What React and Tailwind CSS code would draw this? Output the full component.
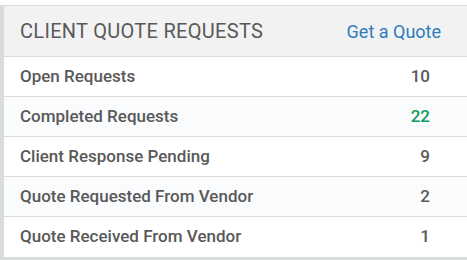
import React from 'react';

const rows = [
  { label: 'Open Requests', count: 10 },
  { label: 'Completed Requests', count: 22, green: true },
  { label: 'Client Response Pending', count: 9 },
  { label: 'Quote Requested From Vendor', count: 2 },
  { label: 'Quote Received From Vendor', count: 1 },
];

export default function App() {
  return (
    <div className="h-[260px] w-[467px] bg-[#d9ddd9] font-['Roboto',sans-serif]">
      <div className="ml-[3px] mt-[5px] w-[464px] border border-r-0 border-[#dcdcdc] bg-white">
        <div className="flex h-[51px] items-center justify-between bg-[#f2f2f2] pl-4 pr-[26px] border-b border-[#dcdcdc]">
          <h2 className="text-[20px] tracking-[0.3px] text-[#595959]">CLIENT QUOTE REQUESTS</h2>
          <a className="text-[18px] text-[#2f7bbd]">Get a Quote</a>
        </div>
        {rows.map((r, i) => (
          <div
            key={r.label}
            className={`flex h-10 items-center justify-between pl-4 pr-[37px] ${i < rows.length - 1 ? 'border-b border-[#dcdcdc]' : ''} ${i % 2 === 1 ? 'bg-[#f9fbfd]' : 'bg-white'}`}
          >
            <span className="text-[17px] font-medium text-[#595959]">{r.label}</span>
            <span className={`text-[17px] font-medium ${r.green ? 'text-[#0b9a5b]' : 'text-[#595959]'}`}>{r.count}</span>
          </div>
        ))}
      </div>
    </div>
  );
}
